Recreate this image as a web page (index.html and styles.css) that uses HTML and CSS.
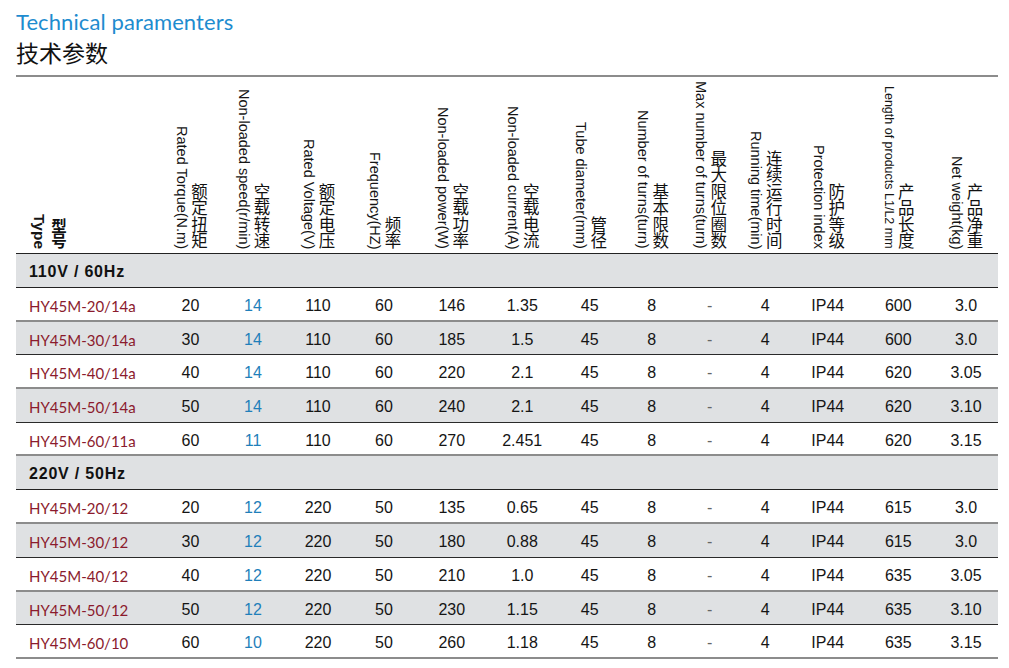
FILE: index.html
```html
<!DOCTYPE html>
<html lang="zh">
<head>
<meta charset="utf-8">
<title>Technical paramenters</title>
<link rel="stylesheet" href="styles.css">
</head>
<body>
<div class="page">
  <h1 class="title-en">Technical paramenters</h1>
  <h2 class="title-zh">技术参数</h2>
  <div class="spec-table">
    <div class="head cols">
      <div class="hcell type"><div class="vt"><div class="zh">型号</div><div class="en">Type</div></div></div>
      <div class="hcell"><div class="vt"><div class="zh">额定扭矩</div><div class="en">Rated Torque(N.m)</div></div></div>
      <div class="hcell"><div class="vt"><div class="zh">空载转速</div><div class="en">Non-loaded speed(r/min)</div></div></div>
      <div class="hcell"><div class="vt"><div class="zh">额定电压</div><div class="en">Rated Voltage(V)</div></div></div>
      <div class="hcell"><div class="vt"><div class="zh">频率</div><div class="en">Frequency(HZ)</div></div></div>
      <div class="hcell"><div class="vt"><div class="zh">空载功率</div><div class="en">Non-loaded power(W)</div></div></div>
      <div class="hcell"><div class="vt"><div class="zh">空载电流</div><div class="en">Non-loaded current(A)</div></div></div>
      <div class="hcell"><div class="vt"><div class="zh">管径</div><div class="en">Tube diameter(mm)</div></div></div>
      <div class="hcell"><div class="vt"><div class="zh">基本限数</div><div class="en">Number of turns(turn)</div></div></div>
      <div class="hcell"><div class="vt"><div class="zh">最大限位圈数</div><div class="en">Max number of turns(turn)</div></div></div>
      <div class="hcell"><div class="vt"><div class="zh">连续运行时间</div><div class="en">Running time(min)</div></div></div>
      <div class="hcell"><div class="vt"><div class="zh">防护等级</div><div class="en">Protection index</div></div></div>
      <div class="hcell"><div class="vt"><div class="zh">产品长度</div><div class="en small">Length of products L1/L2 mm</div></div></div>
      <div class="hcell"><div class="vt"><div class="zh">产品净重</div><div class="en">Net weight(kg)</div></div></div>
    </div>

    <div class="row group"><span class="glabel">110V / 60Hz</span></div>
    <div class="row cols white"><span class="cell model">HY45M-20/14a</span><span class="cell">20</span><span class="cell speed">14</span><span class="cell">110</span><span class="cell">60</span><span class="cell">146</span><span class="cell">1.35</span><span class="cell">45</span><span class="cell">8</span><span class="cell dash">-</span><span class="cell">4</span><span class="cell">IP44</span><span class="cell">600</span><span class="cell">3.0</span></div>
    <div class="row cols gray"><span class="cell model">HY45M-30/14a</span><span class="cell">30</span><span class="cell speed">14</span><span class="cell">110</span><span class="cell">60</span><span class="cell">185</span><span class="cell">1.5</span><span class="cell">45</span><span class="cell">8</span><span class="cell dash">-</span><span class="cell">4</span><span class="cell">IP44</span><span class="cell">600</span><span class="cell">3.0</span></div>
    <div class="row cols white"><span class="cell model">HY45M-40/14a</span><span class="cell">40</span><span class="cell speed">14</span><span class="cell">110</span><span class="cell">60</span><span class="cell">220</span><span class="cell">2.1</span><span class="cell">45</span><span class="cell">8</span><span class="cell dash">-</span><span class="cell">4</span><span class="cell">IP44</span><span class="cell">620</span><span class="cell">3.05</span></div>
    <div class="row cols gray"><span class="cell model">HY45M-50/14a</span><span class="cell">50</span><span class="cell speed">14</span><span class="cell">110</span><span class="cell">60</span><span class="cell">240</span><span class="cell">2.1</span><span class="cell">45</span><span class="cell">8</span><span class="cell dash">-</span><span class="cell">4</span><span class="cell">IP44</span><span class="cell">620</span><span class="cell">3.10</span></div>
    <div class="row cols white"><span class="cell model">HY45M-60/11a</span><span class="cell">60</span><span class="cell speed">11</span><span class="cell">110</span><span class="cell">60</span><span class="cell">270</span><span class="cell">2.451</span><span class="cell">45</span><span class="cell">8</span><span class="cell dash">-</span><span class="cell">4</span><span class="cell">IP44</span><span class="cell">620</span><span class="cell">3.15</span></div>

    <div class="row group"><span class="glabel">220V / 50Hz</span></div>
    <div class="row cols white"><span class="cell model">HY45M-20/12</span><span class="cell">20</span><span class="cell speed">12</span><span class="cell">220</span><span class="cell">50</span><span class="cell">135</span><span class="cell">0.65</span><span class="cell">45</span><span class="cell">8</span><span class="cell dash">-</span><span class="cell">4</span><span class="cell">IP44</span><span class="cell">615</span><span class="cell">3.0</span></div>
    <div class="row cols gray"><span class="cell model">HY45M-30/12</span><span class="cell">30</span><span class="cell speed">12</span><span class="cell">220</span><span class="cell">50</span><span class="cell">180</span><span class="cell">0.88</span><span class="cell">45</span><span class="cell">8</span><span class="cell dash">-</span><span class="cell">4</span><span class="cell">IP44</span><span class="cell">615</span><span class="cell">3.0</span></div>
    <div class="row cols white"><span class="cell model">HY45M-40/12</span><span class="cell">40</span><span class="cell speed">12</span><span class="cell">220</span><span class="cell">50</span><span class="cell">210</span><span class="cell">1.0</span><span class="cell">45</span><span class="cell">8</span><span class="cell dash">-</span><span class="cell">4</span><span class="cell">IP44</span><span class="cell">635</span><span class="cell">3.05</span></div>
    <div class="row cols gray"><span class="cell model">HY45M-50/12</span><span class="cell">50</span><span class="cell speed">12</span><span class="cell">220</span><span class="cell">50</span><span class="cell">230</span><span class="cell">1.15</span><span class="cell">45</span><span class="cell">8</span><span class="cell dash">-</span><span class="cell">4</span><span class="cell">IP44</span><span class="cell">635</span><span class="cell">3.10</span></div>
    <div class="row cols white"><span class="cell model">HY45M-60/10</span><span class="cell">60</span><span class="cell speed">10</span><span class="cell">220</span><span class="cell">50</span><span class="cell">260</span><span class="cell">1.18</span><span class="cell">45</span><span class="cell">8</span><span class="cell dash">-</span><span class="cell">4</span><span class="cell">IP44</span><span class="cell">635</span><span class="cell">3.15</span></div>
  </div>
</div>
</body>
</html>
```

FILE: styles.css
```css
html, body {
  margin: 0;
  background: #ffffff;
}

.page {
  width: 982px;
  padding: 10px 0 0 16px;
}

.title-en {
  margin: 0;
  font-family: Lato, "Open Sans", sans-serif;
  font-weight: 400;
  font-size: 22px;
  line-height: 24px;
  letter-spacing: 0.1px;
  color: #1e8ccf;
}

.title-zh {
  margin: 4px 0 0;
  font-family: "Noto Sans CJK SC", sans-serif;
  font-weight: 400;
  font-size: 23px;
  line-height: 28px;
  color: #111111;
}

.spec-table {
  margin-top: 9px;
  border-top: 2px solid #8c8c8c;
  font-family: "Liberation Sans", Arial, sans-serif;
  color: #151515;
}

.cols {
  display: grid;
  grid-template-columns: 144px 61px 64px 66px 66px 69.5px 71.5px 63.5px 60.5px 55.5px 55.5px 69.5px 71.5px 64px;
}

/* header */
.head {
  height: 177px;
  box-sizing: border-box;
  border-bottom: 1px solid #222222;
}

.hcell {
  display: flex;
  justify-content: center;
  padding-bottom: 4px;
  min-height: 0;
}

.hcell.type {
  justify-content: flex-start;
  padding-left: 14px;
}

.vt {
  writing-mode: vertical-rl;
  text-align: end;
  height: 100%;
}

.vt .zh {
  font-family: "Noto Sans CJK SC", sans-serif;
  font-size: 16.5px;
  line-height: 19px;
  color: #111111;
}

.vt .en {
  font-family: "Liberation Sans", Arial, sans-serif;
  font-size: 14.5px;
  line-height: 17px;
  color: #151515;
}

.vt .en.small {
  font-size: 12.5px;
  line-height: 15px;
}

.type .zh {
  font-weight: 700;
  font-size: 15.5px;
  line-height: 20px;
}

.type .en {
  font-weight: 700;
  font-size: 15.5px;
  line-height: 19px;
}

/* body rows */
.row {
  box-sizing: border-box;
  height: 33.7px;
  padding-top: 4px;
  align-items: center;
}

.row.group {
  display: flex;
  height: 34px;
  padding-top: 2px;
  background: #dfe1e3;
  border-bottom: 1px solid #222222;
  padding-left: 13px;
}

.glabel {
  font-weight: 700;
  font-size: 16px;
  letter-spacing: 0.8px;
  color: #111111;
}

.row.white {
  background: #ffffff;
  border-bottom: 2px solid #8c8c8c;
}

.row.gray {
  background: #dfe1e3;
  border-bottom: 1px solid #2a2a2a;
}

.cell {
  text-align: center;
  font-size: 16px;
  line-height: 20px;
}

.cell.model {
  text-align: left;
  padding-left: 13px;
  font-family: Lato, "Open Sans", sans-serif;
  font-size: 15px;
  color: #8b1b2d;
}

.cell.speed {
  color: #1f7fba;
}

.cell.dash {
  color: #666666;
}
```
